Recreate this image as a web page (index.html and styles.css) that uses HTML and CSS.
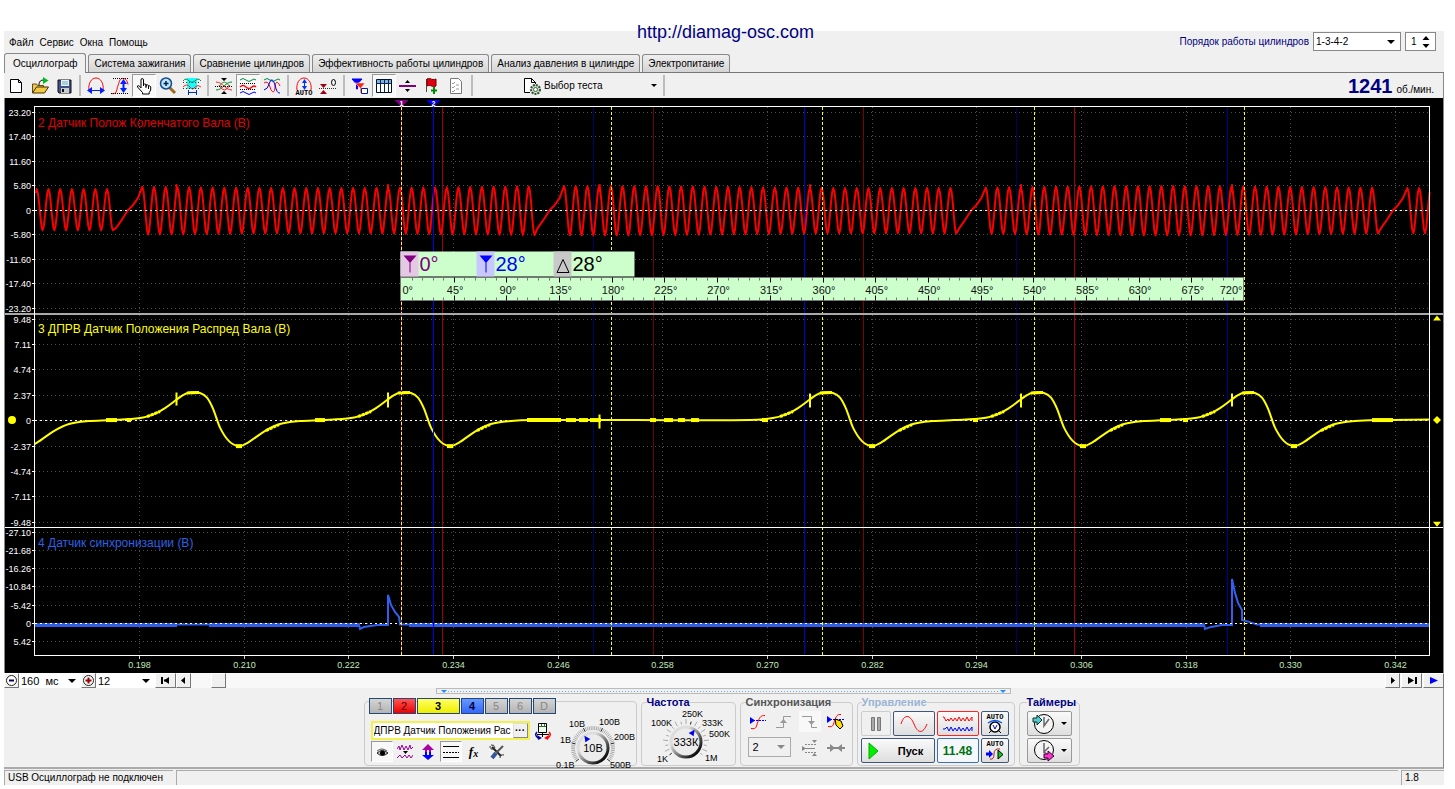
FILE: index.html
```html
<!DOCTYPE html>
<html lang="ru">
<head>
<meta charset="utf-8">
<title>Осциллограф</title>
<link rel="stylesheet" href="styles.css">
</head>
<body>
<a class="site-link" href="http://diamag-osc.com">http://diamag-osc.com</a>
<div class="window">
  <header class="menubar">
    <nav class="menu">
      <button>Файл</button><button>Сервис</button><button>Окна</button><button>Помощь</button>
    </nav>
    <div class="order">
      <label for="order">Порядок работы цилиндров</label>
      <span class="combo combo-order"><select id="order"><option>1-3-4-2</option></select></span>
      <span class="spinner"><input type="text" value="1" aria-label="Номер цилиндра"><svg width="8" height="14"><path d="M4 1l3.500 4h-7zM4 13l3.500-4h-7z"/></svg></span>
    </div>
  </header>

  <nav class="tabs">
    <button class="tab active">Осциллограф</button>
    <button class="tab">Система зажигания</button>
    <button class="tab">Сравнение цилиндров</button>
    <button class="tab">Эффективность работы цилиндров</button>
    <button class="tab">Анализ давления в цилиндре</button>
    <button class="tab">Электропитание</button>
  </nav>

  <div class="toolbar">
    <button class="tool" aria-label="Новый"><svg width="20" height="20" viewBox="0 0 20 20"><path d="M4.500 3.500h8l3 3v10h-11z" fill="#fff" stroke="#000"/><path d="M12.500 3.500v3h3" fill="none" stroke="#000"/></svg></button>
    <button class="tool" aria-label="Открыть"><svg width="20" height="20" viewBox="0 0 20 20"><path d="M2.500 17V8h4l1 1.500h6V12" fill="#e8c860" stroke="#6b4a00"/><path d="M2.500 17l4-6h12l-4 6z" fill="#f5c842" stroke="#403000"/><path d="M9 9c0-4 2-5 5-5" fill="none" stroke="#000"/><path d="M13 1l5.500 3.500L13 8z" fill="#0b2"/></svg></button>
    <button class="tool" aria-label="Сохранить"><svg width="20" height="20" viewBox="0 0 20 20"><path d="M4 4h13v13H5l-1-1z" fill="#40508a" stroke="#111"/><path d="M7 4h8v6H7z" fill="#e4f4ff"/><path d="M8 6h6M8 8h6" stroke="#7ab"/><path d="M7 12h8v5H7z" fill="#ccc"/><path d="M8 13h2v3H8z" fill="#111"/></svg></button>
    <span class="sep"></span>
    <button class="tool" aria-label="Ширина"><svg width="20" height="20" viewBox="0 0 20 20"><path d="M3 14C2 8 5 2 10 2s8 6 7 12" fill="none" stroke="#f00"/><path d="M5 14.500h10" stroke="#0020ff"/><path d="M6 11v7l-5-3.500zM14 11v7l5-3.500z" fill="#0020ff"/></svg></button>
    <button class="tool" aria-label="Размах"><svg width="20" height="20" viewBox="0 0 20 20"><path d="M1 17.500c6 1 5-2 7-8s2-7 5-7c3 0 4 2 5 6" fill="none" stroke="#f00"/><path d="M3 2.500h15M1 17.500h17" stroke="#000" stroke-dasharray="1 1"/><path d="M13.500 6v9" stroke="#0020ff" stroke-width="2"/><path d="M10 8h7l-3.500-5zM10 12h7l-3.500 5z" fill="#0020ff"/></svg></button>
    <button class="tool pressed" aria-label="Рука"><svg width="20" height="20" viewBox="0 0 20 20"><path d="M7 12V4q0-1.500 1.200-1.500T9.500 4v6V8.500q1.200-1 2.500 0v2-1.500q1.400-.8 2.500.5v1.500-1q1.500-.6 2.200.8V14l-1.500 2.500V18H8.500v-1.500L3.500 11q-.5-1.500.8-1.300Q6 10 7 12zM12 10v2M14.500 11v2" fill="#fff" stroke="#000"/></svg></button>
    <button class="tool" aria-label="Лупа"><svg width="20" height="20" viewBox="0 0 20 20"><path d="M11 11l6 6" stroke="#a06818" stroke-width="3"/><circle cx="8" cy="7.500" r="5.500" fill="#b9e4fb" stroke="#124a8c" stroke-width="1.500"/><path d="M8 5v5M5.500 7.500h5" stroke="#024" stroke-width="1.500"/></svg></button>
    <button class="tool" aria-label="Обзор"><svg width="20" height="20" viewBox="0 0 20 20"><path d="M5 2h10v11H5z" fill="#1ff"/><path d="M1 5q3-4 6 0 3 3 6 0 3-4 6 0" fill="none" stroke="#084"/><path d="M1 11q4-4 7 0t5 0q3-3 6 0" fill="none" stroke="#f22"/><path d="M1 6.500h18M1 12.500h18" stroke="#333" stroke-dasharray="1 2"/><path d="M6.500 14v5M14.500 14v5M7 16.500h7" stroke="#0030b0"/></svg></button>
    <span class="sep"></span>
    <button class="tool" aria-label="Сжать"><svg width="20" height="20" viewBox="0 0 20 20"><path d="M2 6c7 0 9 8 16 8" fill="none" stroke="#f22"/><path d="M2 14c7 0 9-8 16-8" fill="none" stroke="#083"/><path d="M5 11q5-10 11 0" fill="none" stroke="#393"/><path d="M5 9q5 10 11 0" fill="none" stroke="#f22"/><path d="M1 10.500h18" stroke="#000" stroke-dasharray="1 1"/><path d="M7 2h6l-3 3zM7 18h6l-3-3z"/></svg></button>
    <button class="tool pressed" aria-label="Раздельно"><svg width="20" height="20" viewBox="0 0 20 20"><g fill="none"><path d="M2 4q3-3 6 0t6 0q2-2 4 0" stroke="#084"/><path d="M2 11q3-3 6 0t6 0q2-2 4 0" stroke="#f00" stroke-width="1.500"/><path d="M2 17q3-3 6 0t6 0q2-2 4 0" stroke="#00f"/></g><path d="M2 7.500h16M2 13.500h16" stroke="#000" stroke-dasharray="1 1"/></svg></button>
    <button class="tool" aria-label="Совместно"><svg width="20" height="20" viewBox="0 0 20 20"><g fill="none"><path d="M2 4q3-3 6 0t6 0q2-2 4 0" stroke="#084"/><path d="M2 7q4-3 6 4c2 7 5 6 5 0s3-6 5-1" stroke="#f00"/><path d="M2 14q4-1 5-6 3-9 6 1 2 9 5 8" stroke="#00f"/></g></svg></button>
    <span class="sep"></span>
    <button class="tool" aria-label="Авто"><svg width="20" height="20" viewBox="0 0 20 20"><path d="M3 14C2 8 5 2 10 2s8 6 7 12" fill="none" stroke="#f00"/><path d="M10.500 5v7" stroke="#0030ff"/><path d="M8 7h5l-2.500-4zM8 10h5l-2.500 4z" fill="#0030ff"/><text class="icon-text" x="10" y="19" text-anchor="middle">AUTO</text></svg></button>
    <button class="tool" aria-label="Ноль"><svg width="20" height="20" viewBox="0 0 20 20"><path d="M1 12.500h18" stroke="#333" stroke-dasharray="1 1"/><path d="M2 8h7l-3.500 4zM2 18h7l-3.500-4z" fill="#a00010"/><ellipse cx="15.500" cy="6.500" rx="2" ry="3" fill="none" stroke="#000"/></svg></button>
    <span class="sep"></span>
    <button class="tool" aria-label="Маркеры"><svg width="20" height="20" viewBox="0 0 20 20"><path d="M2 3h10L7.500 8v5h-1V8z" fill="#00f" stroke="#00f"/><path d="M5 7h10l-4 5v5h-1v-5z" fill="#f21" stroke="#fff" stroke-width=".5"/><path d="M11.500 12.500h6v5h-6z" fill="#fff" stroke="#001a90"/></svg></button>
    <button class="tool pressed" aria-label="Таблица"><svg width="20" height="20" viewBox="0 0 20 20"><path d="M2.500 3.500h15v13h-15z" fill="#fff" stroke="#012"/><path d="M3 4h14v3H3z" fill="#79b5e8"/><path d="M2 7.500h16M6.500 4v12M10.500 4v12M14.500 4v12" stroke="#124"/></svg></button>
    <button class="tool" aria-label="Разделитель"><svg width="20" height="20" viewBox="0 0 20 20"><path d="M1 10h17" stroke="#80007f" stroke-width="2"/><path d="M7 7h5L9.500 4zM7 13h5l-2.500 3z"/></svg></button>
    <button class="tool" aria-label="Флаг"><svg width="20" height="20" viewBox="0 0 20 20"><path d="M4.500 3v13" stroke="#544"/><path d="M5 3c4-2 4 2 9 0v7c-4 2-5-2-9 0z" fill="#e00010" stroke="#700"/><path d="M12 11v7M9 14.500h6" stroke="#080" stroke-width="2"/></svg></button>
    <button class="tool" aria-label="Отчёт"><svg width="20" height="20" viewBox="0 0 20 20"><path d="M4.500 2.500h8l3 3v12h-11z" fill="#fff" stroke="#777"/><path d="M6 7l1 1 2-2M6 11l1 1 2-2M6 15l1 1 2-2M10 9h3M10 13h3" fill="none" stroke="#999"/></svg></button>
    <span class="sep"></span>
    <button class="test-button"><svg width="20" height="20" viewBox="0 0 20 20"><path d="M8 16.500H2.500v-14h7l4 4V8" fill="#fff" stroke="#000"/><path d="M9.500 2.500v4h4" fill="none" stroke="#000"/><circle cx="13.500" cy="13.500" r="4.500" fill="#cdc" stroke="#353" stroke-width="2" stroke-dasharray="2 1"/><circle cx="13.500" cy="13.500" r="2" fill="#fff" stroke="#464"/></svg><span>Выбор теста</span><i class="caret"></i></button>
    <span class="sep"></span>
    <output class="rpm"><b>1241</b><span>об./мин.</span></output>
  </div>

  <main class="scope" id="scope"></main>

  <div class="timebar">
    <button class="small-button" aria-label="Уменьшить"><svg width="13" height="13"><circle cx="6.500" cy="6.500" r="5" fill="#fff" stroke="#222"/><path d="M4 6.500h5" stroke="#006" stroke-width="2"/></svg></button>
    <span class="combo combo-span"><select aria-label="Развёртка"><option>160&nbsp; мс</option></select></span>
    <button class="small-button" aria-label="Увеличить"><svg width="13" height="13"><circle cx="6.500" cy="6.500" r="5" fill="#fff" stroke="#222"/><path d="M3.500 6.500h6M6.500 3.500v6" stroke="#900" stroke-width="2"/></svg></button>
    <span class="combo combo-zoom"><select aria-label="Масштаб"><option>12</option></select></span>
    <button class="small-button wide" aria-label="В начало"><svg width="12" height="9"><path d="M2 1v7M4 4.500h3" stroke="#000" stroke-width="2"/><path d="M9 1v7L4 4.500z"/></svg></button>
    <button class="small-button" aria-label="Назад"><svg width="7" height="9"><path d="M5 1v7L1 4.500z"/></svg></button>
    <div class="track"><div class="thumb"></div></div>
    <button class="small-button" aria-label="Вперёд"><svg width="7" height="9"><path d="M2 1v7l4-3.500z"/></svg></button>
    <button class="small-button wide spaced" aria-label="В конец"><svg width="12" height="9"><path d="M10 1v7" stroke="#000" stroke-width="2"/><path d="M2 1v7l6-3.500z"/></svg></button>
    <button class="small-button wide spaced" aria-label="Воспроизвести"><svg width="12" height="9"><path d="M2 1v7l8-3.500z" fill="#00f"/></svg></button>
  </div>

  <section class="panel">
    <div class="splitter"><i></i><i></i></div>
    <div class="groups">
      <div class="group group-channel">
        <div class="channels">
          <button class="channel">1</button><button class="channel red">2</button><button class="channel yellow">3</button><button class="channel blue">4</button><button class="channel">5</button><button class="channel">6</button><button class="channel">D</button>
        </div>
        <div class="channel-body">
          <div class="channel-left">
            <div class="name-row">
              <div class="name-field"><input type="text" value="ДПРВ Датчик Положения Рас" aria-label="Имя датчика"><button class="dots" aria-label="Выбрать">···</button></div>
              <button class="plain" aria-label="Инверсия"><svg width="18" height="18" viewBox="0 0 18 18"><path d="M4.500 1.500h8v9h-8z" fill="#efe" stroke="#000"/><path d="M5 4.500h7M7.500 2v2M10.500 2v2" stroke="#363"/><path d="M3 12.500h12M8.500 10v5" stroke="#000"/><path d="M4 16Q0 13 3 10" fill="none" stroke="#009" stroke-width="1.500"/><path d="M14 16q4-3 1-6" fill="none" stroke="#f00" stroke-width="1.500"/><path d="M3 13l5 3-4 2z" fill="#009"/><path d="M15 13l-5 3 4 2z" fill="#f00"/></svg></button>
            </div>
            <div class="icon-row">
              <button class="mini pressed" aria-label="Показать"><svg width="16" height="16" viewBox="0 0 16 16"><path d="M3 9q5-5 11 0-6 5-11 0z" fill="#bbb" stroke="#222"/><circle cx="8.500" cy="9" r="2.500"/><path d="M3 7q5-4 10 0" fill="none" stroke="#555"/></svg></button>
              <button class="mini" aria-label="Фильтр"><svg width="16" height="16" viewBox="0 0 16 16"><path d="M0 5l2-3 1 4 2-5 2 5 2-4 2 4 2-5 1 4 2-2M0 14l3-3 2 3 3-3 2 3 2-3 2 3 2-3" fill="none" stroke="#909"/><path d="M6 7h5l-2.500 3z"/></svg></button>
              <button class="mini" aria-label="Сдвиг"><svg width="16" height="18" viewBox="0 0 16 18"><path d="M8 1l6 6h-3v5H9V7H7v5H5V7H2z" fill="#a0a"/><path d="M8 17l-6-5h3V9h2v3h2V9h2v3h3z" fill="#00f"/></svg></button>
              <button class="mini pressed" aria-label="Границы"><svg width="16" height="16" viewBox="0 0 16 16"><path d="M0 2.500h16M0 13.500h16" stroke="#000"/><path d="M0 8.500h16" stroke="#000" stroke-dasharray="2 1"/></svg></button>
              <button class="mini fx">f<sub>x</sub></button>
              <button class="mini" aria-label="Настройка"><svg width="16" height="16" viewBox="0 0 16 16"><path d="M3 3l9 9" stroke="#222" stroke-width="2"/><path d="M1 2q0 4 4 3M2 1q3-1 4 3M11 14q0-4 4-3" fill="none" stroke="#333"/><path d="M14 2L7 9" stroke="#555" stroke-width="2"/><path d="M7 9l-4 5" stroke="#359" stroke-width="4"/></svg></button>
            </div>
          </div>
          <svg class="dial" id="dial-volts" width="80" height="56"></svg>
        </div>
      </div>

      <fieldset class="group group-rate"><legend class="navy">Частота</legend>
        <svg class="dial" id="dial-rate" width="86" height="56"></svg>
      </fieldset>

      <fieldset class="group group-sync"><legend>Синхронизация</legend>
        <div class="sync-grid">
          <button class="mini" aria-label="Уровень"><svg width="18" height="16" viewBox="0 0 18 16"><path d="M2 14.500c6 1 5-2 7-7s3-6 7-6" fill="none" stroke="#f00"/><path d="M1 6.500h16" stroke="#00f" stroke-dasharray="2 1"/><path d="M1 3v7l5-3.500z" fill="#00f"/></svg></button>
          <button class="mini" aria-label="Фронт"><svg width="16" height="16" viewBox="0 0 16 16"><path d="M0 13.500h7.500v-11H15" fill="none" stroke="#999"/><path d="M4 9h7L7.500 5z" fill="#999"/></svg></button>
          <button class="mini lit" aria-label="Спад"><svg width="16" height="16" viewBox="0 0 16 16"><path d="M0 2.500h9.500v11H15" fill="none" stroke="#999"/><path d="M6 7h7l-3.500 4z" fill="#999"/></svg></button>
          <button class="mini" aria-label="Указать"><svg width="20" height="18" viewBox="0 0 20 18"><path d="M2 13.500c6 1 5-2 7-7s3-5 6-5" fill="none" stroke="#f00"/><path d="M1 6.500h17" stroke="#00f" stroke-dasharray="2 1"/><path d="M1 3v7l5-3.500z" fill="#00f"/><path d="M9 6l6 2 2 5-3 3-4-4z" fill="#fd0" stroke="#000"/></svg></button>
          <span class="combo combo-sync"><select aria-label="Канал синхронизации" disabled><option>2</option></select></span>
          <button class="mini" aria-label="Диапазон"><svg width="16" height="16" viewBox="0 0 16 16"><path d="M3 4.500h12M3 12.500h12" stroke="#888" stroke-dasharray="2 1"/><path d="M0 8.500h13" stroke="#888"/><path d="M10 0h5l-2.500 3zM10 16h5l-2.500-3zM0 6v5l4-2.500z" fill="#888"/></svg></button>
          <button class="mini" aria-label="Сжать"><svg width="18" height="16" viewBox="0 0 18 16"><path d="M0 8h18" stroke="#888" stroke-width="2"/><path d="M3 4v8l5-4zM15 4v8l-5-4z" fill="#888"/></svg></button>
        </div>
      </fieldset>

      <fieldset class="group group-control"><legend class="pale">Управление</legend>
        <div class="control-grid">
          <button class="big off" aria-label="Пауза"><svg width="12" height="16"><path d="M1.500 1.500h3v13h-3zM7.500 1.500h3v13h-3z" fill="#aaa" stroke="#777"/></svg></button>
          <button class="big" aria-label="Синус"><svg width="28" height="18"><path d="M1 9C4 -1 10 -1 14 9s9 10 13 0" fill="none" stroke="#f00"/></svg></button>
          <button class="big alert" aria-label="Запись"><svg width="32" height="18"><path d="M1 2h1l2 4 2-2 1 2 2-3 2 3 2-3 2 3 2-4 2 4 2-3 2 3 2-4 2 4 3-4v4" fill="none" stroke="#f00"/><path d="M1 14h2l2-2 2 4 2-4 2 4 2-3 2 3 2-4 2 4 2-3 2 3 2-4 2 4 3-4v4" fill="none" stroke="#00f"/></svg></button>
          <button class="big" aria-label="Автонастройка"><svg width="20" height="22"><text class="icon-text" x="10" y="6" text-anchor="middle">AUTO</text><circle cx="10" cy="14" r="5" fill="#fff" stroke="#000" stroke-width="1.500"/><path d="M3 10q7-5 14 0" fill="none" stroke="#05f" stroke-width="1.500"/><path d="M8 12l2 4 2-4" fill="none" stroke="#00c"/><path d="M4 20l2-2M16 20l-2-2" stroke="#000"/></svg></button>
          <button class="big start"><svg width="12" height="18"><path d="M1 1l9 8-9 8z" fill="#0e0" stroke="#0a0"/></svg><span>Пуск</span></button>
          <button class="big timer">11.48</button>
          <button class="big" aria-label="Автозапуск"><svg width="20" height="22"><text class="icon-text" x="10" y="6" text-anchor="middle">AUTO</text><path d="M5 19q4 1 4-5t6-5" fill="none" stroke="#a22"/><path d="M1 14h3" stroke="#00f" stroke-width="3"/><path d="M4 10v8l4-4z" fill="#00f"/><path d="M13 10v9l5-4.500z" fill="#0c2" stroke="#000"/></svg></button>
        </div>
      </fieldset>

      <fieldset class="group group-timers"><legend class="navy">Таймеры</legend>
        <div class="timers">
          <button class="big" aria-label="Таймер пуска"><svg width="24" height="22" viewBox="0 0 24 22"><circle cx="13" cy="11" r="9.500" fill="#f4f4f4" stroke="#000"/><path d="M13 4v9l5-7" fill="none" stroke="#666" stroke-width="1.500"/><path d="M2 5h4V2l5 5-5 5V9H2z" fill="#5cc" stroke="#033"/></svg><i class="caret"></i></button>
          <button class="big" aria-label="Таймер остановки"><svg width="24" height="22" viewBox="0 0 24 22"><circle cx="13" cy="10" r="9.500" fill="#f4f4f4" stroke="#000"/><path d="M13 3v9l5-5M13 12l3 2" fill="none" stroke="#666" stroke-width="1.500"/><path d="M13 14h4v-3l6 5-6 5v-3h-4z" fill="#f3c" stroke="#303"/></svg><i class="caret"></i></button>
        </div>
      </fieldset>
    </div>
  </section>

  <footer class="status"><span class="status-device">USB Осциллограф не подключен</span><span class="status-info"></span><span class="status-version">1.8</span></footer>
</div>
<script src="scope.js"></script>
</body>
</html>
```
FILE: styles.css
```css
* { box-sizing: border-box; }
body {
  margin: 0;
  min-height: 100vh;
  padding: 31px 11px 4px 4px;
  display: flex;
  background: #fff;
  color: #000;
  font: 10px/14px "Liberation Sans", Arial, sans-serif;
}
button, input, select { font: inherit; color: inherit; margin: 0; padding: 0; border: 0; background: none; border-radius: 0; }
svg { display: block; flex: none; }
.site-link {
  position: absolute;
  top: 21px; left: 0; right: 4px;
  text-align: center;
  font-size: 18px; line-height: 22px;
  color: #000080; text-decoration: none;
}
.window { flex: 1; min-width: 0; display: flex; flex-direction: column; background: #f0f0f0; }

.menubar { display: flex; justify-content: space-between; height: 21px; padding-right: 8px; }
.menu { display: flex; align-items: center; gap: 6px; padding: 2px 0 0 5px; }
.order { display: flex; align-items: center; gap: 4px; color: #000080; }
.combo { position: relative; display: block; background: #fff; color: #000; }
.combo select { appearance: none; display: block; width: 100%; height: 100%; padding: 0 2px; opacity: 1; color: inherit; }
.combo::after {
  content: ""; position: absolute; right: 5px; top: 50%; margin-top: -2px;
  border: 4px solid transparent; border-top-color: currentColor; border-bottom: 0; pointer-events: none;
}
.combo-order { width: 88px; height: 19px; border: 1px solid #888; }
.spinner { display: flex; align-items: center; width: 31px; height: 19px; padding: 0 5px; background: #fff; border: 1px solid #888; color: #000; }
.spinner input { width: 12px; flex: 1; min-width: 0; }

.tabs { display: flex; align-items: flex-end; gap: 2px; height: 21px; border-bottom: 1px solid #777; }
.tab {
  height: 18px; padding: 0 5px; white-space: nowrap;
  border: 1px solid #888; border-bottom: 0; border-radius: 3px 3px 0 0;
  background: linear-gradient(#efefef, #d4d4d4);
}
.tab.active { height: 20px; margin-bottom: -1px; padding: 0 8px; background: #f0f0f0; }

.toolbar { display: flex; align-items: center; height: 25px; background: #f0f0f0; border-right: 1px solid #888; }
.tool { display: grid; place-items: center; width: 24px; height: 23px; }
.pressed { background: #f8f8f8; border: 1px solid; border-color: #999 #fff #fff #999; }
.sep { width: 8px; height: 21px; background: linear-gradient(90deg, transparent 3px, #bbb 3px, #bbb 5px, transparent 5px); }
.test-button { display: flex; align-items: center; gap: 2px; width: 138px; height: 23px; margin-left: 46px; }
.caret { width: 0; border: 3px solid transparent; border-top-color: #000; border-bottom: 0; }
.test-button .caret { margin-left: auto; margin-right: 3px; }
.rpm { display: flex; align-items: baseline; gap: 4px; margin-left: auto; padding-right: 9px; white-space: nowrap; }
.rpm b { font-size: 20px; line-height: 22px; color: #000080; }

.scope { position: relative; flex: 1; min-height: 320px; overflow: hidden; background: #000; border: solid #888; border-width: 0 1px; }
.scope svg { position: absolute; inset: 0; width: 100%; height: 100%; }
.axis-text { font-size: 9px; fill: #fff; }
.time-text { font-size: 9px; fill: #c0e8b8; text-anchor: middle; }
.trace-title { font-size: 12px; }
.ruler-text { font-size: 11px; fill: #111; }
.readout-text { font-size: 20px; }
.marker-text { font-size: 7px; font-weight: bold; fill: #fff; text-anchor: middle; }

.timebar { display: flex; height: 15px; background: #f8f8f8; font-size: 11px; }
.small-button { display: grid; place-items: center; width: 15px; height: 15px; background: #f0f0f0; border: 1px solid; border-color: #fff #777 #777 #fff; }
.small-button.wide { width: 21px; }
.small-button.spaced { margin-left: 1px; }
.combo-span { width: 62px; height: 15px; }
.combo-zoom { width: 59px; height: 15px; }
.track { flex: 1; display: flex; padding-left: 20px; }
.thumb { width: 15px; background: #f0f0f0; border: 1px solid; border-color: #fff #777 #777 #fff; }

.panel { border-bottom: 2px solid #aaa; border-right: 1px solid #888; padding-bottom: 1px; }
.splitter { display: flex; align-items: center; justify-content: space-between; width: 40%; height: 6px; margin: 0 auto; padding: 0 4px; border: 1px solid #bbb; background: repeating-linear-gradient(90deg, #6ab0e0 0 1px, transparent 1px 3px) center / 96% 1px no-repeat; }
.splitter i { border: 3px solid transparent; border-top-color: #1e90ff; border-bottom: 0; }
.groups { display: flex; justify-content: center; gap: 4px; padding: 2px 4px 0 0; }
.group { min-width: 0; height: 70px; margin: 0; padding: 0 4px; border: 1px solid #ccc; border-radius: 4px; }
.group legend { height: 12px; margin-left: 1px; padding: 0; font-weight: bold; font-size: 11px; line-height: 12px; color: #555; }
.group legend.navy { color: #000080; }
.group legend.pale { color: #9ab4d4; }
.group-channel { width: 273px; height: 65px; margin-top: 5px; padding: 0 0 0 4px; }
.channels { display: flex; gap: 1px; margin-top: -4px; font-size: 11px; }
.channel { width: 23px; height: 16px; line-height: 12px; color: #888; background: linear-gradient(#d4d4d4, #b4b4b4); border: 1px solid #234878; }
.channel.red { background: linear-gradient(#f55, #e00); color: #500; }
.channel.yellow { width: 43px; background: linear-gradient(#ff6, #ee0); color: #000; font-weight: bold; }
.channel.blue { background: linear-gradient(#69f, #36f); color: #003; font-weight: bold; }
.channel-body { display: flex; }
.channel-left { width: 187px; padding: 7px 0 0 2px; }
.name-row { display: flex; align-items: center; gap: 4px; }
.name-field { display: flex; width: 159px; height: 19px; padding-left: 1px; background: #fff; border: 2px solid #f4f050; }
.name-field input { flex: 1; min-width: 0; }
.dots { width: 15px; background: #f0f0f0; border: 1px solid; border-color: #ddd #888 #888 #ddd; line-height: 12px; font-weight: bold; }
.plain { width: 20px; }
.icon-row { display: flex; gap: 1px; margin-top: 1px; }
.mini { display: grid; place-items: center; width: 22px; height: 21px; }
.fx { font: italic bold 13px/20px "Liberation Serif", serif; display: block; }
.fx sub { font-size: 10px; line-height: 0; vertical-align: -1px; }
.dial text { font-size: 9px; fill: #000; }
.dial .dial-value { font-size: 11px; text-anchor: middle; }

.group-rate { width: 95px; }
.group-sync { width: 113px; }
.sync-grid { display: grid; grid-template-columns: repeat(4, 23px); column-gap: 3px; row-gap: 5px; margin-top: 3px; margin-left: 2px; }
.lit { background: #f8f8f8; }
.combo-sync { grid-column: span 2; width: 43px; height: 20px; margin-left: 1px; border: 1px solid #aaa; background: #f0f0f0; font-size: 11px; }
.combo-sync select { padding-left: 4px; }
.combo-sync::after { border-top-color: #888; }

.group-control { width: 158px; padding: 0 3px; }
.control-grid { display: grid; grid-template-columns: 30px 42px 42px 28px; gap: 2px; margin-top: 3px; }
.big { display: flex; align-items: center; justify-content: center; height: 25px; border: 1px solid #405878; border-radius: 2px; background: linear-gradient(#fafafa, #dedede); }
.big.off { border-color: #ccc; background: #f0f0f0; }
.big.alert { border-color: #f22; }
.start { grid-column: span 2; gap: 18px; padding-right: 4px; font-weight: bold; font-size: 11px; }
.timer { color: #007010; font-weight: bold; font-size: 12px; background: #f4f8fc; border-color: #4070b0; }
.group-timers { width: 61px; padding: 0 6px; }
.timers { display: grid; gap: 2px; width: 45px; margin-top: 3px; margin-left: 1px; }
.timers .big { gap: 6px; border-color: #999; }
.icon-text { font: bold 7px "Liberation Mono", monospace; fill: #000; }

.status { display: flex; gap: 3px; height: 16px; padding-top: 1px; }
.status span { padding-left: 3px; border: 1px solid #aaa; border-width: 1px 0 0 1px; white-space: nowrap; overflow: hidden; }
.status-device { width: 169px; }
.status-info { flex: 1; }
.status-version { width: 43px; }
```
FILE: scope.js
```js
const NS = 'http://www.w3.org/2000/svg';

function add(parent, name, attrs, text) {
  const el = document.createElementNS(NS, name);
  for (const key in attrs) el.setAttribute(key, attrs[key]);
  if (text !== undefined) el.textContent = text;
  parent.appendChild(el);
  return el;
}

// Plot units: 1395 wide (160 ms) by 548 high, stretched to the window by sx and sy.
const UNIT_W = 1395, UNIT_H = 548, LEFT = 30, TOP = 9, RIGHT = 13, BOTTOM = 17;

const bands = [
  { y: 5, step: 24.4, labels: ['23.20', '17.40', '11.60', '5.80', '0', '-5.80', '-11.60', '-17.40', '-23.20'], title: '2 Датчик Полож Коленчатого Вала (В)', titleY: 20, color: '#e00000', zero: 103 },
  { y: 211.4, step: 25.3, labels: ['9.48', '7.11', '4.74', '2.37', '0', '-2.37', '-4.74', '-7.11', '-9.48'], title: '3 ДПРВ Датчик Положения Распред Вала (В)', titleY: 226, color: '#ffff00', zero: 313 },
  { y: 424, step: 18.2, labels: ['-27.10', '-21.68', '-16.26', '-10.84', '-5.42', '0', '5.42'], title: '4 Датчик синхронизации (В)', titleY: 439, color: '#3060e0', zero: 516 }
];

function crankPoints() {
  const pitch = 11.71, rev = 421.7, pts = [];
  for (let r = -1; r < 4; r++) {
    const start = 107.3 + r * rev;
    for (let k = 0; k < 34; k++) {
      const peak = start + k * pitch;
      for (let i = (k ? -5 : 0); i <= 5; i++) {
        const x = peak + i * pitch / 10;
        if (x < 0 || x > UNIT_W) continue;
        const high = r === -1 ? 20 : 22 + Math.cos(x / 90), low = r === -1 ? 21 : 25 + Math.cos(x / 90);
        const c = Math.cos(i * Math.PI / 5);
        pts.push([x, 102 - (c > 0 ? c * high : c * low)]);
      }
    }
    const end = start + 33 * pitch + pitch / 2;
    [[3, 121], [8, 114], [15, 103], [20, 98], [25, 91]].forEach(p => {
      if (end + p[0] > 0 && end + p[0] < UNIT_W) pts.push([end + p[0], p[1]]);
    });
  }
  return pts;
}

function camPoints() {
  const tail = [[-53, 310.5], [-38, 306], [-28, 300.5], [-17, 292.5], [-10, 287.5], [-3, 285], [7, 285.5], [14, 290], [20, 301], [27, 320], [36, 333.500], [46, 338.500], [55, 335], [71, 324], [87, 316.5], [107, 313.5], [128, 312.5]];
  const pts = [];
  [-53, 158, 369, 791, 1002, 1213].forEach(c => {
    if (c === 791) pts.push([600, 312.5], [715, 312.5]);
    tail.forEach(p => pts.push([c + p[0], p[1]]));
  });
  pts.push([UNIT_W, 312]);
  return pts;
}

const syncPoints = [[0, 516.5], [324, 516.5], [325, 521], [329, 519], [335, 518], [343, 517], [353, 517], [353, 487], [356, 497], [360, 504], [364, 509], [365, 516.5], [1169, 516.5], [1170, 521], [1176, 519], [1187, 517], [1197, 517], [1197, 471], [1200, 485], [1203, 495], [1207, 502], [1207, 512], [1214, 514], [1222, 516.5], [UNIT_W, 516.5]];

function drawScope() {
  const host = document.getElementById('scope');
  host.textContent = '';
  const svg = add(host, 'svg', {});
  const sx = (host.clientWidth - LEFT - RIGHT) / UNIT_W, sy = (host.clientHeight - TOP - BOTTOM) / UNIT_H;
  const X = u => LEFT + u * sx, Y = v => TOP + v * sy, R = n => Math.round(n) + 0.5;
  const line = (x1, y1, x2, y2, stroke, more) => add(svg, 'line', Object.assign({ x1, y1, x2, y2, stroke }, more));
  const linePath = pts => 'M' + pts.map(p => X(p[0]).toFixed(1) + ' ' + Y(p[1]).toFixed(1)).join('L');
  const x0 = X(0), x1 = X(UNIT_W), y0 = Y(0), y1 = Y(UNIT_H);

  bands.forEach(b => b.labels.forEach((label, i) => {
    const y = R(Y(b.y + i * b.step));
    line(x0, y, x1, y, '#4c4c4c', { 'stroke-dasharray': '1 3' });
    line(x0 - 3, y, x0, y, '#fff');
    add(svg, 'text', { class: 'axis-text', x: x0 - 4, y: y + 3, 'text-anchor': 'end' }, label);
  }));
  for (let i = 0; i < 13; i++) {
    const x = R(X(104 + i * 104.65));
    line(x, y0, x, y1, '#4c4c4c', { 'stroke-dasharray': '1 3' });
    line(x, y1, x, y1 + 3, '#ccc');
    add(svg, 'text', { class: 'time-text', x, y: y1 + 12 }, ((198 + i * 12) / 1000).toFixed(3));
  }

  [[558.400, '#00006a'], [769.400, '#0000d0'], [981, '#000060'], [1192.400, '#000090']].forEach(c => line(R(X(c[0])), y0, R(X(c[0])), y1, c[1]));
  [[407.400, '#a00000'], [618, '#700000'], [828.400, '#800000'], [1039.400, '#a00000']].forEach(c => line(R(X(c[0])), y0, R(X(c[0])), y1, c[1]));

  add(svg, 'path', { d: linePath(crankPoints()), fill: 'none', stroke: '#f80000', 'stroke-width': 2, 'stroke-linejoin': 'round' });
  [141.500, 353, 564.700, 775, 986, 1197].forEach(u => line(X(u), Y(77), X(u), Y(85), '#f00', { 'stroke-width': 2 }));

  const sync = { fill: 'none', stroke: '#3060f0' };
  add(svg, 'path', Object.assign({ d: linePath(syncPoints), 'stroke-width': 2 }, sync));
  [[0, 142], [174, 324], [374, 1169], [1225, UNIT_W]].forEach(s => line(X(s[0]), Y(517), X(s[1]), Y(517), '#2f5fe8', { 'stroke-width': 4 }));

  bands.forEach(b => line(x0, R(Y(b.zero - 0.6)), x1, R(Y(b.zero - 0.6)), '#fff', { 'stroke-dasharray': '2 3' }));

  const cam = camPoints().filter(p => p[0] >= -20).map(p => [X(p[0]), Y(p[1])]);
  let d = 'M' + cam[0];
  for (let i = 0; i < cam.length - 1; i++) {
    const a = cam[Math.max(i - 1, 0)], b = cam[i], c = cam[i + 1], e = cam[Math.min(i + 2, cam.length - 1)];
    const h = (c[0] - b[0]) / 3;
    const m1 = (c[1] - a[1]) / (c[0] - a[0] || 1), m2 = (e[1] - b[1]) / (e[0] - b[0] || 1);
    d += `C${b[0] + h} ${b[1] + m1 * h} ${c[0] - h} ${c[1] - m2 * h} ${c[0]} ${c[1]}`;
  }
  const clip = add(svg, 'clipPath', { id: 'plot' });
  add(clip, 'rect', { x: x0, y: y0, width: x1 - x0, height: y1 - y0 });
  add(svg, 'path', { d, fill: 'none', stroke: '#ffff00', 'stroke-width': 2, 'clip-path': 'url(#plot)' });
  [[71, 82], [92, 96], [280, 290], [492, 526], [531, 541], [544, 553], [555, 566], [615, 621], [629, 638], [643, 650], [656, 664], [727, 733], [938, 943], [1125, 1136], [1148, 1153], [1337, 1358]].forEach(s => line(X(s[0]), Y(312.5), X(s[1]), Y(312.5), '#ff0', { 'stroke-width': 4 }));
  // Noise thickening on the top, the bottom and the slopes of each pulse.
  [158, 369, 791, 1002, 1213].forEach(c => {
    line(X(c - 6), Y(285.5), X(c + 6), Y(285), '#ff0', { 'stroke-width': 3 });
    line(X(c + 43), Y(338.5), X(c + 49), Y(338.5), '#ff0', { 'stroke-width': 4 });
    line(X(c + 73), Y(323), X(c + 86), Y(317), '#ff0', { 'stroke-width': 3, 'stroke-dasharray': '3 1' });
    line(X(c - 46), Y(309), X(c - 33), Y(304), '#ff0', { 'stroke-width': 3, 'stroke-dasharray': '3 1' });
  });
  [[141.500, 285, 298], [353, 285, 300], [564.500, 307, 321], [775, 286, 300], [986, 286, 300], [1197, 286, 299]].forEach(s => line(X(s[0]), Y(s[1]), X(s[0]), Y(s[2]), '#ff0', { 'stroke-width': 2 }));

  const c1 = R(X(366)), c2 = R(X(398));
  line(c1, y0, c1, y1, '#900090');
  [366, 576.400, 787.400, 999, 1209.400].forEach(u => line(R(X(u)), y0, R(X(u)), y1, '#ffff00', { 'stroke-dasharray': '3 2' }));
  line(c2, y0, c2, y1, '#0000f0');

  line(0, Y(206.500), host.clientWidth, Y(206.500), '#aaa', { 'stroke-width': 2 });
  line(0, R(Y(419.400)), host.clientWidth, R(Y(419.400)), '#fff');
  add(svg, 'rect', { x: R(x0) - 1, y: R(y0) - 1, width: x1 - x0, height: y1 - y0, fill: 'none', stroke: '#fff' });
  bands.forEach(b => add(svg, 'text', { class: 'trace-title', x: x0 + 3, y: Y(b.titleY), fill: b.color }, b.title));

  [[c1, '#800080', '1'], [c2, '#0000f0', '2']].forEach(m => {
    add(svg, 'path', { d: `M${m[0] - 7} 2h14l-7 7z`, fill: m[1] });
    add(svg, 'text', { class: 'marker-text', x: m[0], y: 8 }, m[2]);
  });
  const mid = Y(312.5), rx = x1 + 7;
  add(svg, 'circle', { cx: 7, cy: mid, r: 4, fill: '#ff0' });
  add(svg, 'path', { d: `M${rx} ${mid - 4}l4 4-4 4-4-4zM${rx} ${Y(208)}l4 5h-8zM${rx} ${Y(419)}l4-5h-8z`, fill: '#ff0' });

  const ry = R(Y(170)), rw = R(X(1209.400)) - c1;
  add(svg, 'rect', { x: c1 - 1, y: ry - 26, width: 234, height: 25, fill: '#ccffcc' });
  [['#e4c8e4', 0, '#800080', '0°'], ['#c8c8ff', 76, '#0000ff', '28°'], ['#c8c8c8', 153, '#000', '28°']].forEach((p, i) => {
    const px = c1 - 1 + p[1];
    add(svg, 'rect', { x: px, y: ry - 26, width: 18, height: 25, fill: p[0] });
    if (i < 2) add(svg, 'path', { d: `M${px + 3} ${ry - 22}h13l-6 7v10h-1v-10z`, fill: p[2] });
    else add(svg, 'path', { d: `M${px + 9.5} ${ry - 18}l6 13h-12z`, fill: 'none', stroke: '#000' });
    add(svg, 'text', { class: 'readout-text', x: px + 19, y: ry - 7, fill: p[2] }, p[3]);
  });
  add(svg, 'rect', { x: c1 - 1, y: ry, width: rw, height: 23, fill: '#ccffcc', stroke: '#777' });
  for (let i = 1; i < 80; i++) {
    const x = R(c1 + rw * i / 80 - 0.5), big = i % 5 === 0, len = big ? 5 : 3;
    line(x, ry, x, ry + len, big ? '#000' : '#777');
    line(x, ry + 23 - len, x, ry + 23, big ? '#000' : '#777');
  }
  for (let i = 0; i <= 16; i++) {
    const anchor = i === 0 ? 'start' : i === 16 ? 'end' : 'middle';
    const x = c1 + rw * i / 16 + (i === 0 ? 1 : i === 16 ? -2 : 1);
    add(svg, 'text', { class: 'ruler-text', x, y: ry + 16, 'text-anchor': anchor }, i * 45 + '°');
  }
}

function drawDial(id, cx, value, pointer, labels) {
  const svg = document.getElementById(id), cy = 34;
  const grad = add(svg, 'linearGradient', { id: id + '-g', x1: 0, y1: 0, x2: 1, y2: 1 });
  add(grad, 'stop', { offset: 0.3, 'stop-color': '#ddd' });
  add(grad, 'stop', { offset: 0.9, 'stop-color': '#000' });
  const fine = id === 'dial-volts' ? 50 : 18;
  for (let i = 0; i <= fine; i++) {
    const a = (142 + 256 * i / fine) * Math.PI / 180, outer = fine === 18 ? 21 + i % 2 * 2 : 22;
    add(svg, 'line', { x1: cx + 18 * Math.cos(a), y1: cy + 18 * Math.sin(a), x2: cx + outer * Math.cos(a), y2: cy + outer * Math.sin(a), stroke: i % 10 ? '#aaa' : '#222' });
  }
  add(svg, 'circle', { cx, cy, r: 15, fill: '#ececec', stroke: `url(#${id}-g)`, 'stroke-width': 3 });
  add(svg, 'path', { d: 'M15 0L9 3V-3z', fill: '#0000f0', transform: `translate(${cx} ${cy}) rotate(${pointer})` });
  add(svg, 'text', { class: 'dial-value', x: cx, y: cy + 4 }, value);
  labels.forEach(l => add(svg, 'text', { x: l[1], y: l[2] }, l[0]));
}

drawScope();
window.addEventListener('resize', drawScope);
drawDial('dial-volts', 37, '10В', -125, [['10В', 13, 13], ['100В', 43, 11], ['1В', 4, 29], ['200В', 58, 26], ['0.1В', 0, 54], ['500В', 54, 54]]);
drawDial('dial-rate', 40, '333К', -55, [['250K', 36, 9], ['100K', 5, 18], ['333K', 56, 18], ['500K', 63, 29], ['1K', 11, 54], ['1M', 59, 53]]);
```
